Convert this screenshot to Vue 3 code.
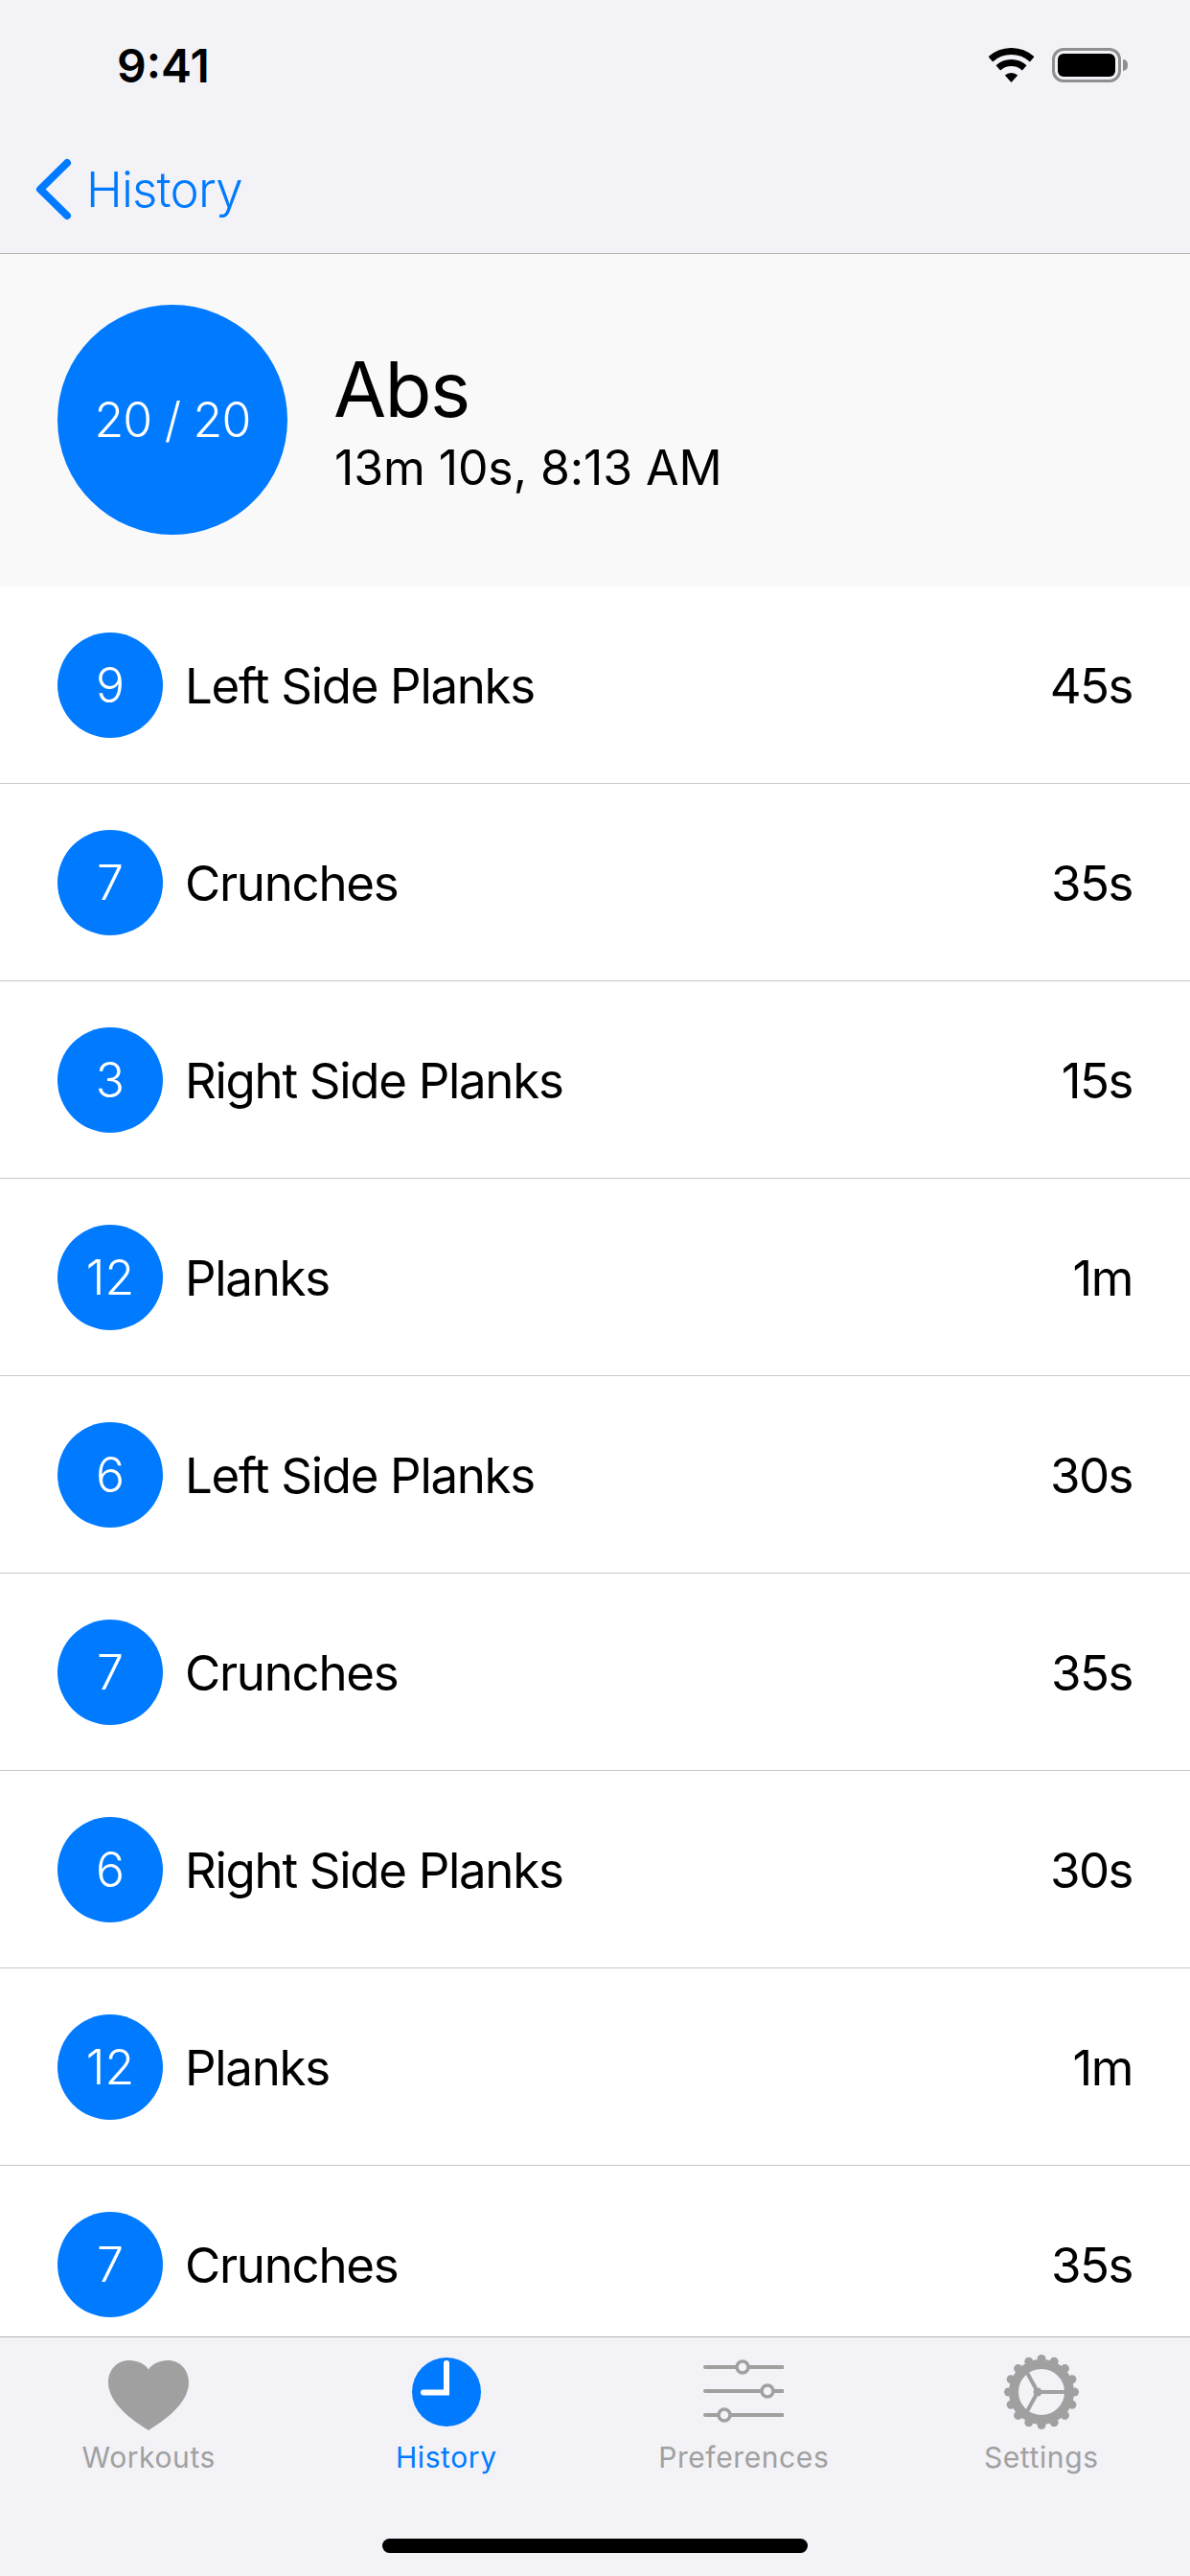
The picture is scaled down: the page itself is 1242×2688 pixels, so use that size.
<script setup>
const exercises = [
  { reps: 9, name: 'Left Side Planks', time: '45s' },
  { reps: 7, name: 'Crunches', time: '35s' },
  { reps: 3, name: 'Right Side Planks', time: '15s' },
  { reps: 12, name: 'Planks', time: '1m' },
  { reps: 6, name: 'Left Side Planks', time: '30s' },
  { reps: 7, name: 'Crunches', time: '35s' },
  { reps: 6, name: 'Right Side Planks', time: '30s' },
  { reps: 12, name: 'Planks', time: '1m' },
  { reps: 7, name: 'Crunches', time: '35s' }
]

const teeth = Array.from({ length: 16 }, (_, i) => {
  const angle = (i * Math.PI) / 8
  return { x: 42 + 34.5 * Math.cos(angle), y: 42 + 34.5 * Math.sin(angle) }
})
</script>

<template>
  <div class="screen">
    <div class="status">
      <span class="clock">9:41</span>
      <div class="status__icons">
        <svg class="wifi" width="47" height="36" viewBox="0 0 47 36">
          <path d="M1.8 11.8A32.5 32.5 0 0 1 45.2 11.8" fill="none" stroke="#000" stroke-width="7" />
          <path d="M9.8 20.8A20.5 20.5 0 0 1 37.2 20.8" fill="none" stroke="#000" stroke-width="7" />
          <path d="M23.5 36L16.8 28.6A10 10 0 0 1 30.2 28.6Z" fill="#000" />
        </svg>
        <div class="battery"><div class="battery__level"></div></div>
        <div class="battery__nub"></div>
      </div>
    </div>

    <div class="nav">
      <svg class="nav__back" width="40" height="66" viewBox="0 0 40 66">
        <path d="M33 5L5 32.5L33 60" fill="none" stroke="#007aff" stroke-width="8" stroke-linecap="round" stroke-linejoin="round" />
      </svg>
      <span class="nav__title">History</span>
    </div>

    <div class="summary">
      <div class="summary__badge">20 / 20</div>
      <div class="summary__info">
        <div class="summary__title">Abs</div>
        <div class="summary__meta">13m 10s, 8:13 AM</div>
      </div>
    </div>

    <div class="list">
      <div v-for="(item, i) in exercises" :key="i" class="row">
        <div class="row__badge">{{ item.reps }}</div>
        <div class="row__name">{{ item.name }}</div>
        <div class="row__time">{{ item.time }}</div>
      </div>
    </div>

    <div class="tabbar">
      <div class="tabs">
        <div class="tab">
          <svg class="tab__icon" width="84" height="84" viewBox="0 0 84 84">
            <path d="M42 18.500C38 12.500 30 9 22 9C9 9 0 19 0 32C0 53 24 71 42 82C60 71 84 53 84 32C84 19 75 9 62 9C54 9 46 12.500 42 18.500Z" fill="#a0a0a0" />
          </svg>
          <span class="tab__label">Workouts</span>
        </div>
        <div class="tab tab--active">
          <svg class="tab__icon" width="84" height="84" viewBox="0 0 84 84">
            <circle cx="42" cy="42" r="36" fill="#007aff" />
            <path d="M42 12V42.500H18" fill="none" stroke="#fff" stroke-width="6" stroke-linecap="round" stroke-linejoin="miter" />
          </svg>
          <span class="tab__label">History</span>
        </div>
        <div class="tab">
          <svg class="tab__icon" width="84" height="84" viewBox="0 0 84 84">
            <g fill="none" stroke="#a0a0a0" stroke-width="4" stroke-linecap="round">
              <path d="M2 16H34M48 16H83" />
              <path d="M2 41H60M74 41H83" />
              <path d="M2 66H15M29 66H83" />
            </g>
            <g fill="none" stroke="#a0a0a0" stroke-width="3.500">
              <circle cx="41" cy="16" r="6" />
              <circle cx="67" cy="41" r="6" />
              <circle cx="22" cy="66" r="6" />
            </g>
          </svg>
          <span class="tab__label">Preferences</span>
        </div>
        <div class="tab">
          <svg class="tab__icon" width="84" height="84" viewBox="0 0 84 84">
            <circle v-for="(t, i) in teeth" :key="i" :cx="t.x" :cy="t.y" r="4.500" fill="#a0a0a0" />
            <circle cx="42" cy="42" r="29" fill="none" stroke="#a0a0a0" stroke-width="10" />
            <g stroke="#a0a0a0" stroke-width="4" fill="none">
              <path d="M38 42H68" />
              <path d="M38 42L26 20" />
              <path d="M38 42L26 64" />
            </g>
            <circle cx="38" cy="42" r="4.500" fill="#a0a0a0" />
          </svg>
          <span class="tab__label">Settings</span>
        </div>
      </div>
      <div class="home"></div>
    </div>
  </div>
</template>

<style scoped>
.screen {
  width: 1242px;
  height: 2688px;
  display: flex;
  flex-direction: column;
  overflow: hidden;
  background: #fff;
  font-family: Inter, "Liberation Sans", sans-serif;
  color: #000;
}

.status {
  height: 136px;
  flex: none;
  display: flex;
  align-items: center;
  justify-content: space-between;
  padding: 0 65px 0 122px;
  box-sizing: border-box;
  background: #f2f2f7;
}

.clock {
  font-size: 48px;
  font-weight: 600;
}

.status__icons {
  display: flex;
  align-items: center;
}

.wifi {
  margin-right: 19px;
}

.battery {
  width: 72px;
  height: 36px;
  box-sizing: border-box;
  border: 3px solid #8e8e93;
  border-radius: 12px;
  padding: 3px;
}

.battery__level {
  height: 100%;
  background: #000;
  border-radius: 6px;
}

.battery__nub {
  width: 5px;
  height: 12px;
  margin-left: 2px;
  background: #8e8e93;
  border-radius: 0 6px 6px 0;
}

.nav {
  height: 129px;
  flex: none;
  box-sizing: border-box;
  display: flex;
  align-items: center;
  padding: 0 0 4px 37px;
  background: #f2f2f7;
  border-bottom: 1px solid #b2b2b2;
}

.nav__back {
  margin-right: 13px;
}

.nav__title {
  color: #007aff;
  font-size: 51px;
  font-weight: 300;
  letter-spacing: -0.8px;
  margin-top: -1px;
}

.summary {
  height: 347px;
  flex: none;
  display: flex;
  align-items: center;
  padding: 0 60px 2px;
  box-sizing: border-box;
  background: #f9f9f9;
}

.summary__badge {
  width: 240px;
  height: 240px;
  flex: none;
  border-radius: 50%;
  background: #007aff;
  color: #fff;
  display: flex;
  align-items: center;
  justify-content: center;
  font-size: 50px;
  font-weight: 300;
  letter-spacing: -0.8px;
}

.summary__info {
  margin-left: 49px;
}

.summary__title {
  font-size: 80px;
  line-height: 98px;
  letter-spacing: -1.6px;
  margin-left: -1px;
}

.summary__meta {
  font-size: 50px;
  line-height: 62px;
  letter-spacing: -0.1px;
  margin-top: 2px;
}

.list {
  flex: 1;
  min-height: 0;
  overflow: hidden;
}

.row {
  height: 206px;
  box-sizing: border-box;
  display: flex;
  align-items: center;
  padding: 0 60px;
  border-bottom: 1px solid #c8c8cc;
}

.row__badge {
  width: 110px;
  height: 110px;
  flex: none;
  border-radius: 50%;
  background: #007aff;
  color: #fff;
  display: flex;
  align-items: center;
  justify-content: center;
  font-size: 50px;
  font-weight: 300;
}

.row__name {
  flex: 1;
  margin: 2px 0 0 23px;
  font-size: 51px;
  letter-spacing: -1.3px;
}

.row__time {
  margin-top: 2px;
  font-size: 51px;
  letter-spacing: -1.5px;
}

.tabbar {
  height: 250px;
  flex: none;
  box-sizing: border-box;
  display: flex;
  flex-direction: column;
  padding-top: 15px;
  background: #f2f2f7;
  border-top: 1px solid #b2b2b2;
}

.tabs {
  display: grid;
  grid-template-columns: repeat(4, 1fr);
}

.tab {
  display: flex;
  flex-direction: column;
  align-items: center;
  color: #a0a0a0;
}

.tab--active {
  color: #007aff;
}

.tab__icon {
  display: block;
}

.tab__label {
  margin-top: 8px;
  font-size: 30px;
  line-height: 36px;
  font-weight: 400;
  letter-spacing: 0.6px;
}

.home {
  width: 444px;
  height: 15px;
  margin: auto auto 24px;
  border-radius: 8px;
  background: #000;
}
</style>

<style>
html,
body {
  margin: 0;
  background: #fff;
}
</style>
